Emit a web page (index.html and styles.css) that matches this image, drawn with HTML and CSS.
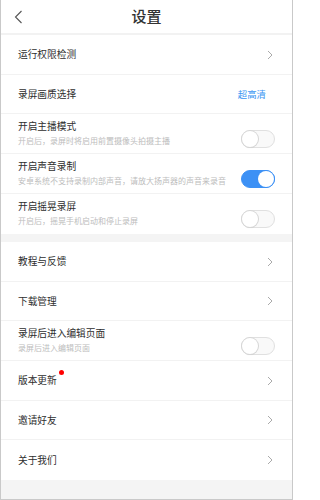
FILE: index.html
```html
<!DOCTYPE html>
<html lang="zh">
<head>
<meta charset="utf-8">
<link rel="stylesheet" href="styles.css">
</head>
<body>
<div class="app">
  <header class="header">
    <svg class="back" width="9" height="14" viewBox="0 0 9 14"><polyline points="7.5,1 1.5,7 7.5,13" fill="none" stroke="#555" stroke-width="1.1"/></svg>
    <h1 class="title">设置</h1>
  </header>
  <div class="group">
    <div class="row">
      <span class="label">运行权限检测</span>
      <svg class="chev" width="6" height="10" viewBox="0 0 6 10"><polyline points="1,1 5,5 1,9" fill="none" stroke="#aaa" stroke-width="1"/></svg>
    </div>
    <div class="row">
      <span class="label">录屏画质选择</span>
      <span class="value">超高清</span>
    </div>
    <div class="row row-sw">
      <div class="texts">
        <div class="label">开启主播模式</div>
        <div class="sub">开启后，录屏时将启用前置摄像头拍摄主播</div>
      </div>
      <span class="switch"></span>
    </div>
    <div class="row row-sw">
      <div class="texts">
        <div class="label">开启声音录制</div>
        <div class="sub">安卓系统不支持录制内部声音，请放大扬声器的声音来录音</div>
      </div>
      <span class="switch on"></span>
    </div>
    <div class="row row-sw last">
      <div class="texts">
        <div class="label">开启摇晃录屏</div>
        <div class="sub">开启后，摇晃手机启动和停止录屏</div>
      </div>
      <span class="switch"></span>
    </div>
  </div>
  <div class="group">
    <div class="row">
      <span class="label">教程与反馈</span>
      <svg class="chev" width="6" height="10" viewBox="0 0 6 10"><polyline points="1,1 5,5 1,9" fill="none" stroke="#aaa" stroke-width="1"/></svg>
    </div>
    <div class="row">
      <span class="label">下载管理</span>
      <svg class="chev" width="6" height="10" viewBox="0 0 6 10"><polyline points="1,1 5,5 1,9" fill="none" stroke="#aaa" stroke-width="1"/></svg>
    </div>
    <div class="row row-sw">
      <div class="texts">
        <div class="label">录屏后进入编辑页面</div>
        <div class="sub">录屏后进入编辑页面</div>
      </div>
      <span class="switch"></span>
    </div>
    <div class="row">
      <span class="label dot">版本更新</span>
      <svg class="chev" width="6" height="10" viewBox="0 0 6 10"><polyline points="1,1 5,5 1,9" fill="none" stroke="#aaa" stroke-width="1"/></svg>
    </div>
    <div class="row">
      <span class="label">邀请好友</span>
      <svg class="chev" width="6" height="10" viewBox="0 0 6 10"><polyline points="1,1 5,5 1,9" fill="none" stroke="#aaa" stroke-width="1"/></svg>
    </div>
    <div class="row last">
      <span class="label">关于我们</span>
      <svg class="chev" width="6" height="10" viewBox="0 0 6 10"><polyline points="1,1 5,5 1,9" fill="none" stroke="#aaa" stroke-width="1"/></svg>
    </div>
  </div>
</div>
</body>
</html>
```
FILE: styles.css
```css
* { box-sizing: border-box; }
html, body { margin: 0; padding: 0; }
body {
  font-family: "Noto Sans CJK SC", "Noto Sans", sans-serif;
  background: #fff;
}
.app {
  width: 293px;
  height: 500px;
  border-left: 1px solid #c9c9c9;
  border-right: 1px solid #c9c9c9;
  border-bottom: 1px solid #c9c9c9;
  background: #f4f4f4;
  display: flex;
  flex-direction: column;
}
.header {
  position: relative;
  height: 35px;
  flex: none;
  background: #fff;
  border-bottom: 2px solid #f2f2f2;
  display: flex;
  align-items: center;
  justify-content: center;
}
.back {
  position: absolute;
  left: 13px;
  top: 10px;
}
.title {
  margin: 0;
  font-size: 15px;
  font-weight: 500;
  color: #333;
  line-height: 20px;
  margin-top: -2px;
}
.group {
  background: #fff;
  flex: none;
}
.group + .group { margin-top: 8px; }
.row {
  height: 39.5px;
  border-bottom: 1px solid #f2f2f2;
  display: flex;
  align-items: center;
  justify-content: space-between;
  padding: 0 19px 0 17px;
}
.row.last { border-bottom: none; }
.label {
  font-size: 9.7px;
  color: #2e2e2e;
  line-height: 14px;
  position: relative;
}
.label.dot::after {
  content: "";
  position: absolute;
  right: -7px;
  top: -3px;
  width: 5px;
  height: 5px;
  border-radius: 50%;
  background: #f00;
}
.value {
  font-size: 9.4px;
  color: #3b95f2;
  margin-right: 7px;
}
.chev { display: block; margin-top: 1px; }
.row-sw {
  height: 40px;
  align-items: flex-start;
  padding-right: 17px;
}
.texts { padding-top: 5px; }
.sub {
  margin-top: 2px;
  font-size: 8px;
  line-height: 12px;
  color: #bdbdbd;
  white-space: nowrap;
}
.switch {
  flex: none;
  margin-top: 16px;
  width: 34px;
  height: 18px;
  border-radius: 9px;
  border: 1px solid #e0e0e0;
  background: #f9f9f9;
  position: relative;
}
.switch::after {
  content: "";
  position: absolute;
  left: 0;
  top: 0;
  width: 16px;
  height: 16px;
  border-radius: 50%;
  background: #fff;
  box-shadow: 0 0 0 1px #d6d6d6, 0 1px 1px rgba(0,0,0,0.1);
}
.switch.on {
  background: #3d91f5;
  border-color: #3d91f5;
}
.switch.on::after {
  left: auto;
  right: 0;
  box-shadow: 0 0 0 1px #3d91f5;
}
```
